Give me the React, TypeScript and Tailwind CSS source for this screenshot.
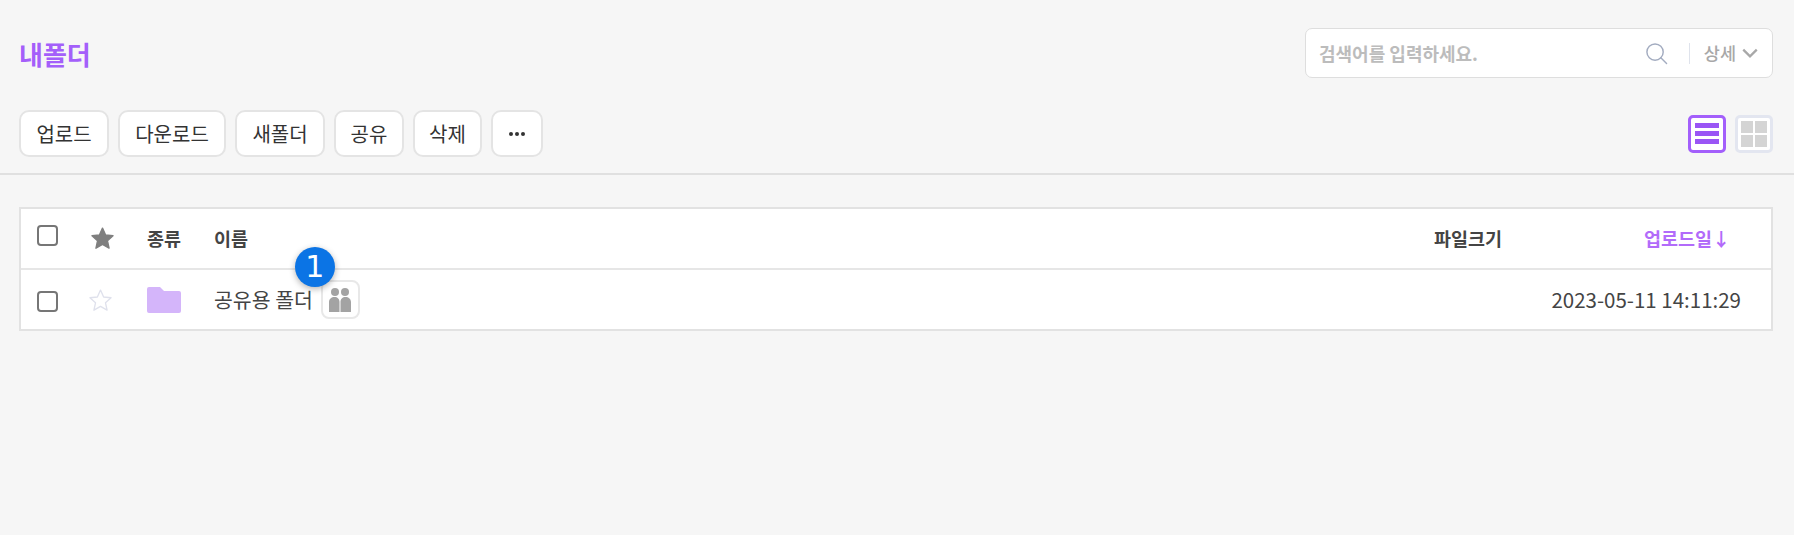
import React from 'react';

const font = '[font-family:"Noto_Sans_CJK_KR","Noto_Sans",sans-serif]';

const actions = [
  { label: '업로드', width: 'w-[90px]' },
  { label: '다운로드', width: 'w-[108px]' },
  { label: '새폴더', width: 'w-[90px]' },
  { label: '공유', width: 'w-[70px]' },
  { label: '삭제', width: 'w-[69px]' },
];

const Star: React.FC<{ filled?: boolean }> = ({ filled }) => (
  <svg viewBox="0 0 24 24" className="w-[25px] h-[25px]">
    <path
      d="M12 2l3 6.6 7.1.8-5.3 4.8 1.5 7.1L12 17.700l-6.300 3.600 1.500-7.100L1.900 9.400 9 8.600z"
      fill={filled ? '#7f7f7f' : 'none'}
      stroke={filled ? '#7f7f7f' : '#dfe1ec'}
      strokeWidth="1.300"
      strokeLinejoin="round"
    />
  </svg>
);

const Checkbox: React.FC<{ className?: string }> = ({ className }) => (
  <span className={`block w-[21px] h-[21px] rounded-[4px] border-2 border-[#767676] bg-white ${className ?? ''}`} />
);

const App: React.FC = () => {
  return (
    <div className={`w-[1794px] h-[535px] bg-[#f6f6f6] overflow-hidden ${font}`}>
      <div className="h-[175px] border-b-2 border-[#e0e0e0] pl-[19px] pr-[21px] pt-[28px]">
        <div className="flex items-center justify-between h-[50px]">
          <h1 className="text-[26px] leading-none font-bold text-[#a45ffa] mt-[2px]">내폴더</h1>
          <div className="w-[468px] h-[50px] bg-white border border-[#dedede] rounded-[7px] flex items-center pl-[13px] pr-[12px]">
            <span className="flex-1 text-[18px] font-bold text-[#bcbcbc]">검색어를 입력하세요.</span>
            <svg viewBox="0 0 24 24" className="w-[23px] h-[23px]" fill="none" stroke="#a3acc0" strokeWidth="1.500">
              <circle cx="10.500" cy="10.500" r="8.500" />
              <path d="M16.500 16.500l6 6" strokeLinecap="round" />
            </svg>
            <span className="w-px h-[21px] bg-[#dfe3ec] ml-[21px] mr-[14px]" />
            <span className="text-[17.500px] font-medium text-[#a8a8a8]">상세</span>
            <svg viewBox="0 0 16 16" className="w-[18px] h-[18px] ml-[5px] mr-[1px]" fill="none" stroke="#a8a8a8" strokeWidth="2">
              <path d="M2 5l6 6 6-6" />
            </svg>
          </div>
        </div>
        <div className="flex items-center justify-between mt-[32px] h-[47px]">
          <div className="flex gap-[9px]">
            {actions.map((a) => (
              <button
                key={a.label}
                className={`${a.width} h-[47px] bg-white border-2 border-[#e4e4e4] rounded-[10px] text-[20px] text-[#333333]`}
              >
                {a.label}
              </button>
            ))}
            <button className="w-[52px] h-[47px] bg-white border-2 border-[#e4e4e4] rounded-[10px] flex items-center justify-center gap-[2px]">
              <span className="w-[4px] h-[4px] rounded-full bg-[#333333]" />
              <span className="w-[4px] h-[4px] rounded-full bg-[#333333]" />
              <span className="w-[4px] h-[4px] rounded-full bg-[#333333]" />
            </button>
          </div>
          <div className="flex gap-[9px]">
            <div className="w-[38px] h-[38px] bg-white border-[3px] border-[#a35ffb] rounded-[5px] flex flex-col items-center justify-center gap-[3px]">
              <span className="w-[24px] h-[5px] bg-[#9a55f5]" />
              <span className="w-[24px] h-[5px] bg-[#9a55f5]" />
              <span className="w-[24px] h-[5px] bg-[#9a55f5]" />
            </div>
            <div className="w-[38px] h-[38px] bg-white border-[3px] border-[#e3e6f0] rounded-[5px] grid grid-cols-2 gap-[2px] p-[3px]">
              <span className="bg-[#d4d4d4]" />
              <span className="bg-[#d4d4d4]" />
              <span className="bg-[#d4d4d4]" />
              <span className="bg-[#d4d4d4]" />
            </div>
          </div>
        </div>
      </div>

      <div className="ml-[19px] mr-[21px] mt-[32px] bg-white border-2 border-[#e2e2e2]">
        <div className="h-[61px] flex items-center border-b-2 border-[#e6e6e6] text-[18.500px] font-bold text-[#444444]">
          <div className="w-[126px] flex items-center pl-[16px]">
            <Checkbox className="-mt-[6px]" />
            <span className="ml-[32px] flex"><Star filled /></span>
          </div>
          <span className="w-[67px]">종류</span>
          <span className="flex-1">이름</span>
          <span className="w-[210px]">파일크기</span>
          <span className="w-[127px] text-[#b26bfa]">업로드일↓</span>
        </div>
        <div className="h-[59px] flex items-center text-[20px] text-[#444444]">
          <div className="w-[126px] flex items-center pl-[16px]">
            <Checkbox className="mt-[4px]" />
            <span className="ml-[30px] flex mt-[2px]"><Star /></span>
          </div>
          <span className="w-[67px] flex">
            <svg viewBox="0 0 34 26" className="w-[34px] h-[26px]">
              <path d="M0 2a2 2 0 0 1 2-2h11l4 4h15a2 2 0 0 1 2 2v18a2 2 0 0 1-2 2H2a2 2 0 0 1-2-2z" fill="#d4b5fa" />
            </svg>
          </span>
          <div className="flex-1 flex items-center">
            <span className="text-[20.500px]">공유용 폴더</span>
            <span className="relative ml-[8px] w-[39px] h-[39px] bg-white border-2 border-[#e8e8e8] rounded-[8px] flex items-center justify-center">
              <svg viewBox="0 0 22 24" className="w-[22px] h-[24px]" fill="#a3a3a3">
                <circle cx="6" cy="4" r="4" />
                <circle cx="16" cy="4" r="4" />
                <path d="M0 24V14c0-3 2.500-5 5.500-5s5 2 5 5v10zM11.500 24V14c0-3 2-5 5-5s5.500 2 5.500 5v10z" />
              </svg>
              <span className="absolute -left-[28px] -top-[35px] w-[40px] h-[40px] rounded-full bg-[#0b74e5] shadow-[0_2px_6px_rgba(0,0,0,0.3)] text-white text-[30px] leading-none flex items-center justify-center [font-family:'DejaVu_Sans',sans-serif]">
                1
              </span>
            </span>
          </div>
          <span className="pr-[30px] text-right text-[20.500px] whitespace-nowrap">2023-05-11 14:11:29</span>
        </div>
      </div>
    </div>
  );
};

export default App;
